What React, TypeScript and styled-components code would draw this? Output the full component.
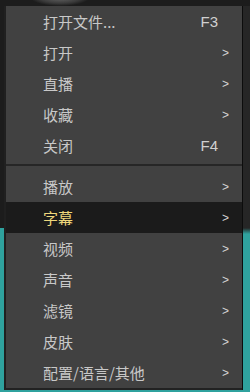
import React from "react";
import styled, { createGlobalStyle } from "styled-components";

const GlobalStyle = createGlobalStyle`
  html, body {
    margin: 0;
    padding: 0;
  }
  body {
    width: 250px;
    height: 392px;
    overflow: hidden;
    background:
      radial-gradient(ellipse 30px 9px at 60px -3px, #6a6a6a 0%, #3a3a3a 70%, transparent 100%),
      linear-gradient(to bottom, #1c1c1c 0, #1c1c1c 228px, #2fa29e 228px, #2fa29e 100%);
    font-family: "Noto Sans CJK SC", "Noto Sans", sans-serif;
  }
`;

const Backdrop = styled.div`
  display: flex;
  padding: 6px 0 2px 4px;
  height: 392px;
  box-sizing: border-box;
`;

const RightGutter = styled.div`
  flex: 1;
  border-left: 1px solid #0c0c0c;
  background: linear-gradient(to bottom, #262626 0, #262626 222px, #2fa29e 228px);
`;

const Menu = styled.div`
  width: 236px;
  border-left: 2px solid #202020;
  border-bottom: 2px solid #222;
  background: #414141;
  display: flex;
  flex-direction: column;
`;

const Row = styled.div<{ $active?: boolean }>`
  display: flex;
  align-items: center;
  height: 31px;
  padding-left: 37px;
  background: ${(p) => (p.$active ? "#1b1b1b" : "transparent")};
  color: ${(p) => (p.$active ? "#eed77c" : "#c8c8c8")};
  font-size: 15px;
  line-height: 1;
`;

const Label = styled.span`
  flex: 1;
  white-space: nowrap;
`;

const Shortcut = styled.span`
  font-family: "Liberation Sans", Arial, sans-serif;
  font-size: 15px;
  margin-right: 24px;
  color: #d0d0d0;
`;

const Arrow = styled.span`
  font-family: "Liberation Sans", Arial, sans-serif;
  font-size: 12px;
  margin-right: 13px;
  color: #d4d4d4;
`;

const Separator = styled.div`
  height: 10px;
  display: flex;
  align-items: center;
  &::before {
    content: "";
    flex: 1;
    height: 2px;
    background: #262626;
    margin-top: -2px;
  }
`;

type Item = { label: string; key?: string; sub?: boolean; active?: boolean };

const top: Item[] = [
  { label: "打开文件...", key: "F3" },
  { label: "打开", sub: true },
  { label: "直播", sub: true },
  { label: "收藏", sub: true },
  { label: "关闭", key: "F4" },
];

const bottom: Item[] = [
  { label: "播放", sub: true },
  { label: "字幕", sub: true, active: true },
  { label: "视频", sub: true },
  { label: "声音", sub: true },
  { label: "滤镜", sub: true },
  { label: "皮肤", sub: true },
  { label: "配置/语言/其他", sub: true },
];

const MenuRow = ({ item }: { item: Item }) => (
  <Row $active={item.active}>
    <Label>{item.label}</Label>
    {item.key && <Shortcut>{item.key}</Shortcut>}
    {item.sub && <Arrow>&gt;</Arrow>}
  </Row>
);

export default function App() {
  return (
    <>
      <GlobalStyle />
      <Backdrop>
        <Menu>
          {top.map((it) => (
            <MenuRow key={it.label} item={it} />
          ))}
          <Separator />
          {bottom.map((it) => (
            <MenuRow key={it.label} item={it} />
          ))}
        </Menu>
        <RightGutter />
      </Backdrop>
    </>
  );
}
